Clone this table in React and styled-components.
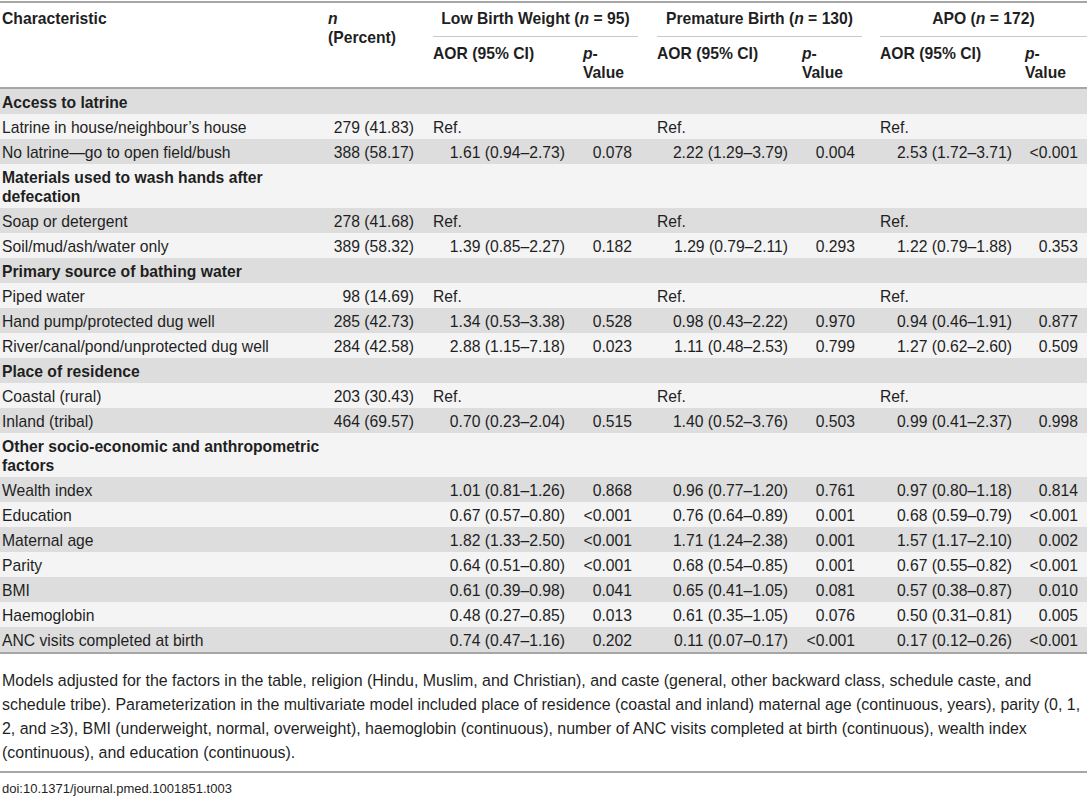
import styled, { createGlobalStyle } from 'styled-components';

const GlobalStyle = createGlobalStyle`
  html, body {
    margin: 0;
    padding: 0;
    background: #ffffff;
  }
  body {
    font-family: "Liberation Sans", Arial, sans-serif;
    color: #1f1f1f;
  }
`;

// cell box width plus left/right padding, per column
const COLS = [
  { w: 324, pl: 2, pr: 4 },
  { w: 100, pl: 4, pr: 10 },
  { w: 150, pl: 9, pr: 9 },
  { w: 71, pl: 9, pr: 13 },
  { w: 153, pl: 12, pr: 10 },
  { w: 72, pl: 4, pr: 15 },
  { w: 149, pl: 10, pr: 7 },
  { w: 68, pl: 6, pr: 9 },
];

const Page = styled.div`
  width: 1087px;
  padding-top: 1px;
  font-size: 15.7px;
`;

const Table = styled.table`
  width: 1087px;
  table-layout: fixed;
  border-collapse: collapse;
  border-top: 2px solid #a6a6a6;
  border-bottom: 2px solid #a6a6a6;
  line-height: 19px;
`;

const Col = styled.col`
  width: ${p => p.$w}px;
`;

const Head = styled.thead`
  border-bottom: 2px solid #a6a6a6;
`;

const HeadCell = styled.th`
  font-weight: 700;
  text-align: left;
  vertical-align: top;
  padding: ${p => (p.$sub ? '7px' : '6px')} ${p => COLS[p.$c].pr}px ${p => (p.$sub ? '5px' : '0')} ${p => COLS[p.$c].pl}px;
`;

const GroupCell = styled.th`
  font-weight: 700;
  padding: 6px 0 0 0;
  vertical-align: top;
`;

const GroupLabel = styled.div`
  margin: 0 ${p => p.$mr}px 0 ${p => p.$ml}px;
  padding-bottom: 8px;
  border-bottom: 1px solid #c9c9c9;
  text-align: center;
  white-space: nowrap;
`;

const Row = styled.tr`
  background: ${p => (p.$dark ? '#dddddd' : '#f4f4f4')};
`;

const Cell = styled.td`
  padding: 4px ${p => COLS[p.$c].pr}px 2px ${p => COLS[p.$c].pl}px;
  text-align: ${p => p.$align || 'left'};
  white-space: nowrap;
  vertical-align: top;
`;

const SectionCell = styled.td`
  padding: 4px ${COLS[0].pr}px 2px ${COLS[0].pl}px;
  font-weight: 700;
`;

const Note = styled.p`
  margin: 15px 0 0 0;
  padding: 0 2px;
  font-size: 15.95px;
  line-height: 24px;
  white-space: nowrap;
`;

const Rule = styled.hr`
  margin: 6px 0 0 0;
  border: 0;
  border-top: 2px solid #a6a6a6;
`;

const Doi = styled.div`
  padding: 7px 2px 0;
  font-size: 13px;
  line-height: 18px;
`;

const rows = [
  { section: 'Access to latrine' },
  ['Latrine in house/neighbour\u2019s house', '279 (41.83)', 'Ref.', '', 'Ref.', '', 'Ref.', ''],
  ['No latrine\u2014go to open field/bush', '388 (58.17)', '1.61 (0.94\u20132.73)', '0.078', '2.22 (1.29\u20133.79)', '0.004', '2.53 (1.72\u20133.71)', '<0.001'],
  { section: 'Materials used to wash hands after defecation' },
  ['Soap or detergent', '278 (41.68)', 'Ref.', '', 'Ref.', '', 'Ref.', ''],
  ['Soil/mud/ash/water only', '389 (58.32)', '1.39 (0.85\u20132.27)', '0.182', '1.29 (0.79\u20132.11)', '0.293', '1.22 (0.79\u20131.88)', '0.353'],
  { section: 'Primary source of bathing water' },
  ['Piped water', '98 (14.69)', 'Ref.', '', 'Ref.', '', 'Ref.', ''],
  ['Hand pump/protected dug well', '285 (42.73)', '1.34 (0.53\u20133.38)', '0.528', '0.98 (0.43\u20132.22)', '0.970', '0.94 (0.46\u20131.91)', '0.877'],
  ['River/canal/pond/unprotected dug well', '284 (42.58)', '2.88 (1.15\u20137.18)', '0.023', '1.11 (0.48\u20132.53)', '0.799', '1.27 (0.62\u20132.60)', '0.509'],
  { section: 'Place of residence' },
  ['Coastal (rural)', '203 (30.43)', 'Ref.', '', 'Ref.', '', 'Ref.', ''],
  ['Inland (tribal)', '464 (69.57)', '0.70 (0.23\u20132.04)', '0.515', '1.40 (0.52\u20133.76)', '0.503', '0.99 (0.41\u20132.37)', '0.998'],
  { section: 'Other socio-economic and anthropometric factors' },
  ['Wealth index', '', '1.01 (0.81\u20131.26)', '0.868', '0.96 (0.77\u20131.20)', '0.761', '0.97 (0.80\u20131.18)', '0.814'],
  ['Education', '', '0.67 (0.57\u20130.80)', '<0.001', '0.76 (0.64\u20130.89)', '0.001', '0.68 (0.59\u20130.79)', '<0.001'],
  ['Maternal age', '', '1.82 (1.33\u20132.50)', '<0.001', '1.71 (1.24\u20132.38)', '0.001', '1.57 (1.17\u20132.10)', '0.002'],
  ['Parity', '', '0.64 (0.51\u20130.80)', '<0.001', '0.68 (0.54\u20130.85)', '0.001', '0.67 (0.55\u20130.82)', '<0.001'],
  ['BMI', '', '0.61 (0.39\u20130.98)', '0.041', '0.65 (0.41\u20131.05)', '0.081', '0.57 (0.38\u20130.87)', '0.010'],
  ['Haemoglobin', '', '0.48 (0.27\u20130.85)', '0.013', '0.61 (0.35\u20131.05)', '0.076', '0.50 (0.31\u20130.81)', '0.005'],
  ['ANC visits completed at birth', '', '0.74 (0.47\u20131.16)', '0.202', '0.11 (0.07\u20130.17)', '<0.001', '0.17 (0.12\u20130.26)', '<0.001'],
];

const groups = [
  { label: 'Low Birth Weight', n: 95, ml: 9, mr: 7 },
  { label: 'Premature Birth', n: 130, ml: 12, mr: 8 },
  { label: 'APO', n: 172, ml: 10, mr: 0 },
];

const noteLines = [
  'Models adjusted for the factors in the table, religion (Hindu, Muslim, and Christian), and caste (general, other backward class, schedule caste, and',
  'schedule tribe). Parameterization in the multivariate model included place of residence (coastal and inland) maternal age (continuous, years), parity (0, 1,',
  '2, and \u22653), BMI (underweight, normal, overweight), haemoglobin (continuous), number of ANC visits completed at birth (continuous), wealth index',
  '(continuous), and education (continuous).',
];

const alignFor = (i, value) => {
  if (i === 0) return 'left';
  if (value === 'Ref.') return 'left';
  return 'right';
};

export default function App() {
  return (
    <Page>
      <GlobalStyle />
      <Table>
        <colgroup>
          {COLS.map((c, i) => (
            <Col key={i} $w={c.w} />
          ))}
        </colgroup>
        <Head>
          <tr>
            <HeadCell $c={0} rowSpan={2}>Characteristic</HeadCell>
            <HeadCell $c={1} rowSpan={2}>
              <i>n</i>
              <br />
              (Percent)
            </HeadCell>
            {groups.map(g => (
              <GroupCell key={g.label} colSpan={2}>
                <GroupLabel $ml={g.ml} $mr={g.mr}>
                  {g.label} (<i>n</i> = {g.n})
                </GroupLabel>
              </GroupCell>
            ))}
          </tr>
          <tr>
            {groups.map((g, gi) => [
              <HeadCell key={g.label + 'aor'} $c={2 + gi * 2} $sub>
                AOR (95% CI)
              </HeadCell>,
              <HeadCell key={g.label + 'p'} $c={3 + gi * 2} $sub>
                <i>p</i>-
                <br />
                Value
              </HeadCell>,
            ])}
          </tr>
        </Head>
        <tbody>
          {rows.map((r, ri) => (
            <Row key={ri} $dark={ri % 2 === 0}>
              {r.section ? (
                <>
                  <SectionCell>{r.section}</SectionCell>
                  <td colSpan={7} />
                </>
              ) : (
                r.map((v, ci) => (
                  <Cell key={ci} $c={ci} $align={alignFor(ci, v)}>
                    {v}
                  </Cell>
                ))
              )}
            </Row>
          ))}
        </tbody>
      </Table>
      <Note>
        {noteLines.map((line, i) => (
          <span key={i}>
            {line}
            {i < noteLines.length - 1 && <br />}
          </span>
        ))}
      </Note>
      <Rule />
      <Doi>doi:10.1371/journal.pmed.1001851.t003</Doi>
    </Page>
  );
}
